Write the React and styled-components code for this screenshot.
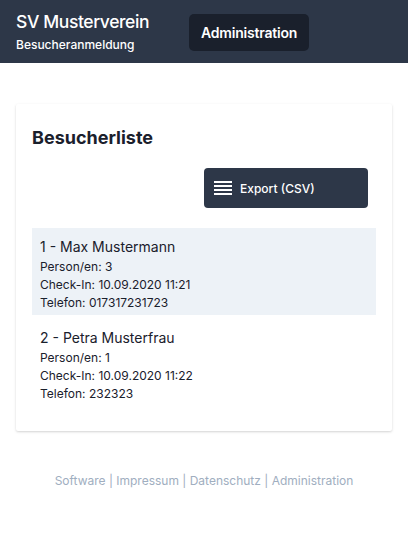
import styled, { createGlobalStyle } from "styled-components";

const GlobalStyle = createGlobalStyle`
    html, body {
        margin: 0;
        padding: 0;
        background: #fff;
        font-family: Inter, "Noto Sans", "Liberation Sans", sans-serif;
        color: #1a202c;
    }
`;

const visitors = [
    { id: 1, name: "Max Mustermann", persons: 3, checkIn: "10.09.2020 11:21", phone: "017317231723" },
    { id: 2, name: "Petra Musterfrau", persons: 1, checkIn: "10.09.2020 11:22", phone: "232323" },
];

const ListIcon = () => (
    <svg width="18" height="14" viewBox="0 0 18 14" fill="#fff">
        <rect x="0" y="0" width="18" height="2" />
        <rect x="0" y="4" width="18" height="2" />
        <rect x="0" y="8" width="18" height="2" />
        <rect x="0" y="12" width="18" height="2" />
    </svg>
);

export default function App() {
    return <>
        <GlobalStyle />
        <Header>
            <Brand>
                <h1>SV Musterverein</h1>
                <span>Besucheranmeldung</span>
            </Brand>
            <NavButton type="button">Administration</NavButton>
        </Header>
        <Main>
            <Card>
                <Title>Besucherliste</Title>
                <Toolbar>
                    <ExportButton type="button">
                        <ListIcon />
                        Export (CSV)
                    </ExportButton>
                </Toolbar>
                <List>
                    {visitors.map((v, i) => (
                        <Entry key={v.id} $odd={i % 2 === 0}>
                            <EntryName>{v.id} - {v.name}</EntryName>
                            <EntryLine>Person/en: {v.persons}</EntryLine>
                            <EntryLine>Check-In: {v.checkIn}</EntryLine>
                            <EntryLine>Telefon: {v.phone}</EntryLine>
                        </Entry>
                    ))}
                </List>
            </Card>
        </Main>
        <Footer>
            Software | Impressum | Datenschutz | Administration
        </Footer>
    </>;
}

const Header = styled.header`
    display: flex;
    align-items: center;
    gap: 41px;
    height: 63px;
    padding: 0 16px;
    background: #2d3748;
    color: #fff;
    box-sizing: border-box;
`;

const Brand = styled.div`
    display: flex;
    flex-direction: column;
    width: 132px;
    white-space: nowrap;
    h1 {
        margin: 0;
        font-size: 17.5px;
        letter-spacing: -0.4px;
        font-weight: 500;
        line-height: 24px;
    }
    span {
        font-size: 12px;
        font-weight: 500;
        line-height: 18px;
        margin-top: 2px;
    }
`;

const NavButton = styled.button`
    height: 37px;
    padding: 0 12px;
    border: none;
    border-radius: 5px;
    background: #1a202c;
    color: #fff;
    font-family: inherit;
    font-size: 14px;
    font-weight: 600;
    letter-spacing: -0.2px;
    margin-top: 1px;
`;

const Main = styled.main`
    padding: 41px 16px 0;
`;

const Card = styled.section`
    background: #fff;
    border-radius: 2px;
    box-shadow: 0 1px 3px rgba(0, 0, 0, 0.12), 0 1px 2px rgba(0, 0, 0, 0.06);
    padding: 20px 16px 25px;
`;

const Title = styled.h2`
    margin: 0;
    font-size: 18px;
    font-weight: 700;
    line-height: 27px;
`;

const Toolbar = styled.div`
    display: flex;
    justify-content: flex-end;
    padding: 17px 8px 0 0;
`;

const ExportButton = styled.button`
    display: flex;
    align-items: center;
    gap: 8px;
    width: 164px;
    height: 40px;
    padding: 0 10px;
    border: none;
    border-radius: 4px;
    background: #2d3748;
    color: #fff;
    font-family: inherit;
    font-size: 12px;
    font-weight: 500;
`;

const List = styled.div`
    display: flex;
    flex-direction: column;
    gap: 4px;
    margin-top: 20px;
`;

const Entry = styled.div`
    padding: 9px 8px 3px;
    background: ${p => (p.$odd ? "#edf2f7" : "transparent")};
`;

const EntryName = styled.div`
    font-size: 14px;
    line-height: 20px;
    margin-bottom: 1px;
`;

const EntryLine = styled.div`
    font-size: 12px;
    line-height: 18px;
`;

const Footer = styled.footer`
    padding-top: 41px;
    text-align: center;
    font-size: 12px;
    line-height: 18px;
    color: #a0aec0;
`;
